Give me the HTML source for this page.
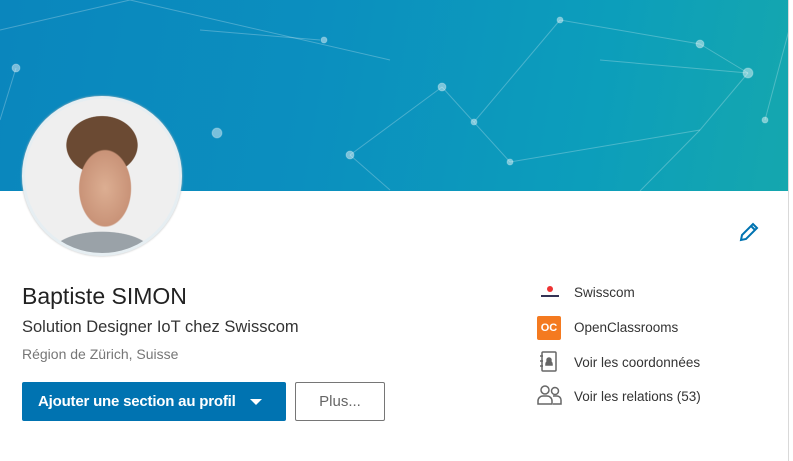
<!DOCTYPE html>
<html><head><style>
body{margin:0;width:793px;height:461px;overflow:hidden;background:#fff;font-family:"Liberation Sans",sans-serif;position:relative}
.banner{position:absolute;left:0;top:0;width:789px;height:191px;background:linear-gradient(100deg,#0a86bd 0%,#0b8fbf 40%,#0c9ebb 75%,#15a7ae 100%)}
.rb{position:absolute;left:788px;top:0;width:1px;height:461px;background:#d9d9d9}
.av{position:absolute;left:22px;top:96px;width:154px;height:154px;border-radius:50%;border:3px solid #e6eef2;background:radial-gradient(ellipse 34px 50px at 52% 58%,#dcae92 0,#c99378 75%,transparent 78%),radial-gradient(ellipse 44px 36px at 50% 30%,#6b4a33 0,#6b4a33 80%,transparent 82%),radial-gradient(ellipse 70px 30px at 50% 100%,#9aa2a8 0,#9aa2a8 70%,transparent 72%),#efefef;overflow:hidden;box-shadow:0 0 2px #bbb}
.t{position:absolute;color:#333}
.btn{position:absolute;left:22px;top:382px;width:264px;height:39px;background:#0073b1;color:#fff;font-weight:bold;font-size:15px;line-height:39px;border-radius:2px;box-sizing:border-box;padding-left:16px;white-space:nowrap;letter-spacing:-0.2px}
.btn2{position:absolute;left:295px;top:382px;width:90px;height:39px;border:1px solid #767676;color:#666;font-size:15px;line-height:37px;text-align:center;box-sizing:border-box;border-radius:2px}
.r{position:absolute;left:574px;font-size:13.5px;color:#333}
</style></head><body>
<div class="banner">
<svg width="789" height="191" style="position:absolute;left:0;top:0" stroke="rgba(255,255,255,0.25)" fill="rgba(255,255,255,0.45)" stroke-width="1">
<line x1="0" y1="30" x2="130" y2="0"/><line x1="130" y1="0" x2="390" y2="60"/><line x1="350" y1="155" x2="442" y2="87"/><line x1="442" y1="87" x2="510" y2="162"/><line x1="510" y1="162" x2="700" y2="130"/><line x1="700" y1="130" x2="748" y2="73"/><line x1="748" y1="73" x2="700" y2="44"/><line x1="700" y1="44" x2="560" y2="20"/><line x1="474" y1="122" x2="560" y2="20"/><line x1="350" y1="155" x2="390" y2="190"/><line x1="16" y1="68" x2="0" y2="120"/><line x1="600" y1="60" x2="748" y2="73"/><line x1="640" y1="191" x2="700" y2="130"/><line x1="765" y1="120" x2="789" y2="30"/><line x1="200" y1="30" x2="320" y2="40"/>
<circle cx="16" cy="68" r="4"/><circle cx="442" cy="87" r="4"/><circle cx="474" cy="122" r="3"/><circle cx="510" cy="162" r="3"/><circle cx="350" cy="155" r="4"/><circle cx="748" cy="73" r="5"/><circle cx="700" cy="44" r="4"/><circle cx="765" cy="120" r="3"/><circle cx="217" cy="133" r="5"/><circle cx="324" cy="40" r="3"/><circle cx="560" cy="20" r="3"/>
</svg></div>
<div class="rb"></div>
<div class="av"></div>
<svg style="position:absolute;left:738px;top:221px" width="22" height="22" viewBox="0 0 22 22"><path d="M3 19 L4 14 L15 3 L19 7 L8 18 Z M13 5 L17 9" fill="none" stroke="#0073b1" stroke-width="2"/></svg>
<div class="t" style="left:22px;top:283px;font-size:23px;color:#222">Baptiste SIMON</div>
<div class="t" style="left:22px;top:318px;font-size:16.5px">Solution Designer IoT chez Swisscom</div>
<div class="t" style="left:22px;top:346px;font-size:14px;color:#767676">Région de Zürich, Suisse</div>
<div class="btn">Ajouter une section au profil <span style="display:inline-block;margin-left:10px;width:0;height:0;border-left:6px solid transparent;border-right:6px solid transparent;border-top:6px solid #fff;vertical-align:middle"></span></div>
<div class="btn2">Plus...</div>
<div style="position:absolute;left:541px;top:286px;width:18px;height:14px"><div style="width:6px;height:6px;border-radius:50%;background:#e33;margin:0 auto"></div><div style="height:2px;background:#335;margin-top:3px"></div></div>
<div style="position:absolute;left:537px;top:316px;width:24px;height:24px;background:#f47a20;color:#fff;font-size:11px;font-weight:bold;line-height:24px;text-align:center;border-radius:2px">OC</div>
<svg style="position:absolute;left:537px;top:350px" width="24" height="24" viewBox="0 0 24 24" fill="none" stroke="#666" stroke-width="1.5"><rect x="5" y="2" width="14" height="19" rx="1"/><path d="M3 6h3M3 11h3M3 16h3"/><circle cx="12" cy="10" r="2" fill="#666"/><path d="M9 15h6v-1a3 3 0 0 0-6 0z" fill="#666"/></svg>
<svg style="position:absolute;left:537px;top:384px" width="26" height="22" viewBox="0 0 26 22" fill="none" stroke="#666" stroke-width="1.5"><circle cx="8" cy="6" r="4"/><path d="M1 20v-3a5 5 0 0 1 5-5h4a5 5 0 0 1 5 5v3z"/><circle cx="18" cy="7" r="3.5"/><path d="M16 12h4a4 4 0 0 1 4 4v4h-8"/></svg>
<div class="r" style="top:285px">Swisscom</div>
<div class="r" style="top:320px">OpenClassrooms</div>
<div class="r" style="top:355px">Voir les coordonnées</div>
<div class="r" style="top:389px">Voir les relations (53)</div>
</body></html>
